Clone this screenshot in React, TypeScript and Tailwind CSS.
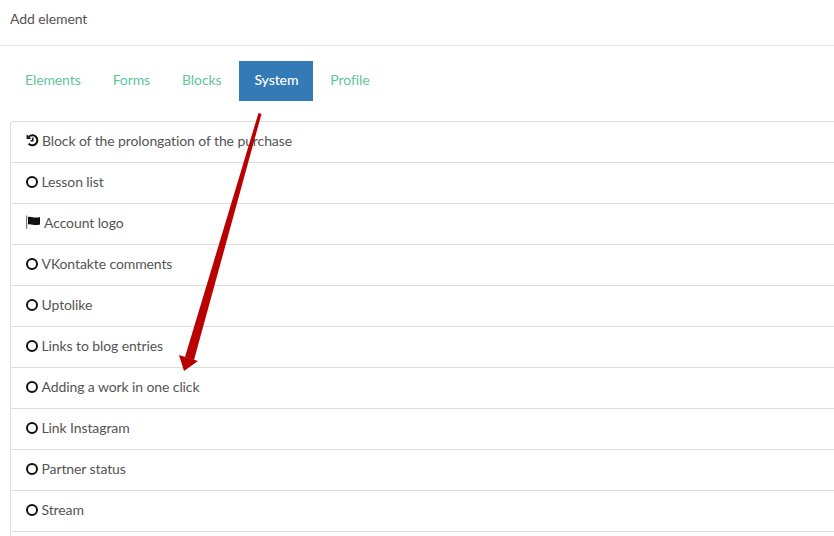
const tabs = ['Elements', 'Forms', 'Blocks', 'System', 'Profile'];

const rows = [
  { label: 'Block of the prolongation of the purchase', icon: 'history' },
  { label: 'Lesson list', icon: 'circle' },
  { label: 'Account logo', icon: 'flag' },
  { label: 'VKontakte comments', icon: 'circle' },
  { label: 'Uptolike', icon: 'circle' },
  { label: 'Links to blog entries', icon: 'circle' },
  { label: 'Adding a work in one click', icon: 'circle' },
  { label: 'Link Instagram', icon: 'circle' },
  { label: 'Partner status', icon: 'circle' },
  { label: 'Stream', icon: 'circle' },
  { label: '', icon: '' },
];

const tabClass: Record<string, string> = {
  Elements: 'text-[#5fc69c]',
  Forms: 'ml-[2px] text-[#5fc69c]',
  Blocks: 'ml-[2px] text-[#5fc69c]',
  System: 'ml-[3px] bg-[#337ab7] font-medium text-white',
  Profile: 'ml-[2px] text-[#5fc69c]',
};

function RowIcon({ icon }: { icon: string }) {
  if (icon === 'history')
    return (
      <svg width="13" height="14" viewBox="0 0 13 14" fill="none" className="mr-[3px] -translate-y-[2px] text-[#111]">
        <path d="M3 3.6 A5 5 0 1 1 2.6 10.6" stroke="currentColor" strokeWidth="2" />
        <path d="M0.6 1.2 L0.6 6 L5.4 6 Z" fill="currentColor" />
        <path d="M6.8 4.5 V7.8 H4.6" stroke="currentColor" strokeWidth="1.5" />
      </svg>
    );
  if (icon === 'flag')
    return (
      <svg width="14" height="14" viewBox="0 0 14 14" fill="none" className="mr-[4px] -translate-y-[2px]">
        <path d="M0.5 0.5 V14" stroke="#777" strokeWidth="1.4" />
        <path d="M2 2 C5 0.8 8 3.6 14 2 V9.6 C8 11.2 5 8.4 2 9.6 Z" fill="#111" />
      </svg>
    );
  if (icon === 'circle')
    return <span className="mr-[4px] h-[11.5px] w-[11.5px] -translate-y-[1px] rounded-full border-2 border-[#111]" />;
  return null;
}

export default function App() {
  return (
    <div className="relative h-[536px] w-[834px] overflow-hidden bg-white font-['Lato',sans-serif] text-[14px] tracking-[-0.1px] text-[#555]">
      {/* Header */}
      <div className="flex h-[46px] items-center border-b border-[#e5e5e5] px-[10px] pb-[8px]">
        Add element
      </div>

      {/* Tabs */}
      <div className="flex pl-[10px] pt-[15px]">
        {tabs.map((tab) => (
          <div key={tab} className={`flex h-[40px] items-center px-[15px] pb-[4px] ${tabClass[tab]}`}>
            {tab}
          </div>
        ))}
      </div>

      {/* List */}
      <div className="ml-[10px] mt-[20px] w-[900px] rounded-tl-[4px] border-l border-t border-[#ddd]">
        {rows.map((row, i) => (
          <div
            key={i}
            className="flex h-[41px] items-center border-b border-[#ddd] pl-[15px]"
          >
            <RowIcon icon={row.icon} />
            <span className="-translate-y-[2px]">{row.label}</span>
          </div>
        ))}
      </div>

      {/* Arrow */}
      <svg className="absolute left-0 top-0" width="834" height="536" fill="none">
        <path d="M258.5 113 L261.5 114 L194 360 L185 357 Z" fill="#b90000" />
        <path d="M179 355 L198 361 L184 371 Z" fill="#b90000" />
      </svg>
    </div>
  );
}
